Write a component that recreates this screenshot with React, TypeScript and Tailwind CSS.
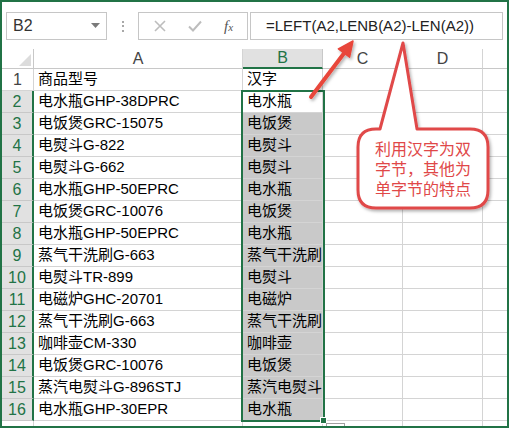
import React from 'react';

const ROWS: [string, string][] = [
  ['商品型号', '汉字'],
  ['电水瓶GHP-38DPRC', '电水瓶'],
  ['电饭煲GRC-15075', '电饭煲'],
  ['电熨斗G-822', '电熨斗'],
  ['电熨斗G-662', '电熨斗'],
  ['电水瓶GHP-50EPRC', '电水瓶'],
  ['电饭煲GRC-10076', '电饭煲'],
  ['电水瓶GHP-50EPRC', '电水瓶'],
  ['蒸气干洗刷G-663', '蒸气干洗刷'],
  ['电熨斗TR-899', '电熨斗'],
  ['电磁炉GHC-20701', '电磁炉'],
  ['蒸气干洗刷G-663', '蒸气干洗刷'],
  ['咖啡壶CM-330', '咖啡壶'],
  ['电饭煲GRC-10076', '电饭煲'],
  ['蒸汽电熨斗G-896STJ', '蒸汽电熨斗'],
  ['电水瓶GHP-30EPR', '电水瓶'],
  ['', ''],
];

const FONT = 'font-["Liberation_Sans","Noto_Sans_CJK_SC",sans-serif]';

function FormulaBar() {
  return (
    <div className="flex h-[28px] mt-[10px] ml-[4px]">
      {/* Name box */}
      <div className="w-[101px] border border-[#c6c6c6] flex items-center justify-between pl-[6px] pr-[6px]">
        <span className="text-[16px] text-[#333]">B2</span>
        <svg width="9" height="6" viewBox="0 0 9 6">
          <path d="M0 0 L9 0 L4.5 5 Z" fill="#7a7a7a" />
        </svg>
      </div>
      {/* Grip dots */}
      <div className="w-[31px] flex flex-col items-center justify-center gap-[2.5px]">
        <div className="w-[2px] h-[2px] bg-[#a8a8a8]" />
        <div className="w-[2px] h-[2px] bg-[#a8a8a8]" />
        <div className="w-[2px] h-[2px] bg-[#a8a8a8]" />
      </div>
      {/* Cancel / enter / fx */}
      <div className="w-[110px] border border-[#c6c6c6] flex items-center">
        <svg className="ml-[15px]" width="12" height="12" viewBox="0 0 12 12">
          <path d="M1 1 L11 11 M11 1 L1 11" stroke="#bdbdbd" strokeWidth="1.6" />
        </svg>
        <svg className="ml-[22px]" width="14" height="12" viewBox="0 0 14 12">
          <path d="M1 6.5 L5 10.5 L13 1.5" stroke="#bdbdbd" strokeWidth="2" fill="none" />
        </svg>
        <span className='ml-[22px] italic font-["Liberation_Serif",serif] text-[15px] text-[#555] leading-none'>
          f<span className="text-[11px]">x</span>
        </span>
      </div>
      {/* Formula */}
      <div className="ml-[2px] w-[253px] border border-[#c6c6c6] flex items-center pl-[15px]">
        <span className="text-[15px] text-[#222]">=LEFT(A2,LENB(A2)-LEN(A2))</span>
      </div>
    </div>
  );
}

function HeaderRow() {
  const cols = [
    { l: 'A', w: 'w-[209px]' },
    { l: 'B', w: 'w-[80px]' },
    { l: 'C', w: 'w-[80px]' },
    { l: 'D', w: 'w-[80px]' },
  ];
  return (
    <div className="flex h-[20px]">
      <div className="w-[32px] border-r border-b border-[#c8c8c8] relative">
        <svg className="absolute right-[2px] bottom-[2px]" width="12" height="12" viewBox="0 0 12 12">
          <path d="M12 0 L12 12 L0 12 Z" fill="#dcdcdc" />
        </svg>
      </div>
      {cols.map((c) =>
        c.l === 'B' ? (
          <div
            key={c.l}
            className={`${c.w} border-r border-[#c8c8c8] border-b-2 border-b-[#217346] bg-[#e1e1e1] text-[#217346] flex items-center justify-center text-[16px]`}
          >
            {c.l}
          </div>
        ) : (
          <div
            key={c.l}
            className={`${c.w} border-r border-b border-[#d4d4d4] border-b-[#c8c8c8] text-[#444] flex items-center justify-center text-[16px]`}
          >
            {c.l}
          </div>
        )
      )}
      <div className="flex-1 border-b border-[#c8c8c8]" />
    </div>
  );
}

function DataRow({ n, a, b }: { n: number; a: string; b: string }) {
  const selected = n >= 2 && n <= 16;
  const grey = n >= 3 && n <= 16;
  return (
    <div className="flex h-[22px]">
      <div
        className={
          selected
            ? 'w-[32px] border-b border-[#c8c8c8] border-r-2 border-r-[#217346] bg-[#e1e1e1] text-[#217346] flex items-center justify-center text-[16px]'
            : 'w-[32px] border-b border-r border-[#d4d4d4] text-[#444] flex items-center justify-center text-[16px]'
        }
      >
        {n <= 16 ? n : ''}
      </div>
      <div className="w-[209px] border-r border-b border-[#d4d4d4] pl-[4px] flex items-center text-[15px] text-black whitespace-nowrap overflow-hidden">
        {a}
      </div>
      <div
        className={`w-[80px] border-r border-b border-[#d4d4d4] pl-[4px] flex items-center text-[15px] text-black whitespace-nowrap overflow-hidden ${
          grey ? 'bg-[#c9c9c9]' : ''
        }`}
      >
        {b}
      </div>
      <div className="w-[80px] border-r border-b border-[#d4d4d4]" />
      <div className="w-[80px] border-r border-b border-[#d4d4d4]" />
      <div className="flex-1 border-b border-[#d4d4d4]" />
    </div>
  );
}

export default function App() {
  return (
    <div className={`relative w-[509px] h-[428px] border-2 border-[#217346] bg-white overflow-hidden ${FONT}`}>
      <FormulaBar />
      <div className="mt-[9px]">
        <HeaderRow />
        {ROWS.map(([a, b], i) => (
          <DataRow key={i} n={i + 1} a={a} b={b} />
        ))}
      </div>

      {/* selection B2:B16 */}
      <div className="absolute left-[239px] top-[88px] w-[84px] h-[332px] border-2 border-[#217346]" />
      <div className="absolute left-[318px] top-[415px] w-[7px] h-[7px] bg-[#217346] border border-white" />
      <div className="absolute left-[324px] top-[421px] w-[19px] h-[12px] border border-[#a0a0a0] bg-white" />

      {/* arrow + callout */}
      <svg className="absolute -left-[2px] -top-[2px] pointer-events-none" width="509" height="428" viewBox="0 0 509 428">
        <defs>
          <filter id="sh" x="-20%" y="-20%" width="140%" height="140%">
            <feDropShadow dx="1.5" dy="2" stdDeviation="1.5" floodColor="#000" floodOpacity="0.3" />
          </filter>
        </defs>
        <g filter="url(#sh)">
          <line x1="311" y1="97" x2="345" y2="52" stroke="#e8463b" strokeWidth="4" strokeLinecap="round" />
          <path d="M353 41 L349.6 57.2 L338.4 48.8 Z" fill="#e8463b" stroke="#e8463b" strokeWidth="1.5" strokeLinejoin="round" />
        </g>
        <path
          d="M376 129 L380 129 L403 43 L417 129 L470 129 Q488 129 488 147 L488 190 Q488 208 470 208 L376 208 Q358 208 358 190 L358 147 Q358 129 376 129 Z"
          fill="#fff"
          stroke="#e04848"
          strokeWidth="3"
          strokeLinejoin="round"
          filter="url(#sh)"
        />
      </svg>
      <div className="absolute left-[356px] top-[138px] w-[130px] text-center text-[16px] leading-[20px] text-[#e04848]">
        利用汉字为双
        <br />
        字节，其他为
        <br />
        单字节的特点
      </div>
    </div>
  );
}
